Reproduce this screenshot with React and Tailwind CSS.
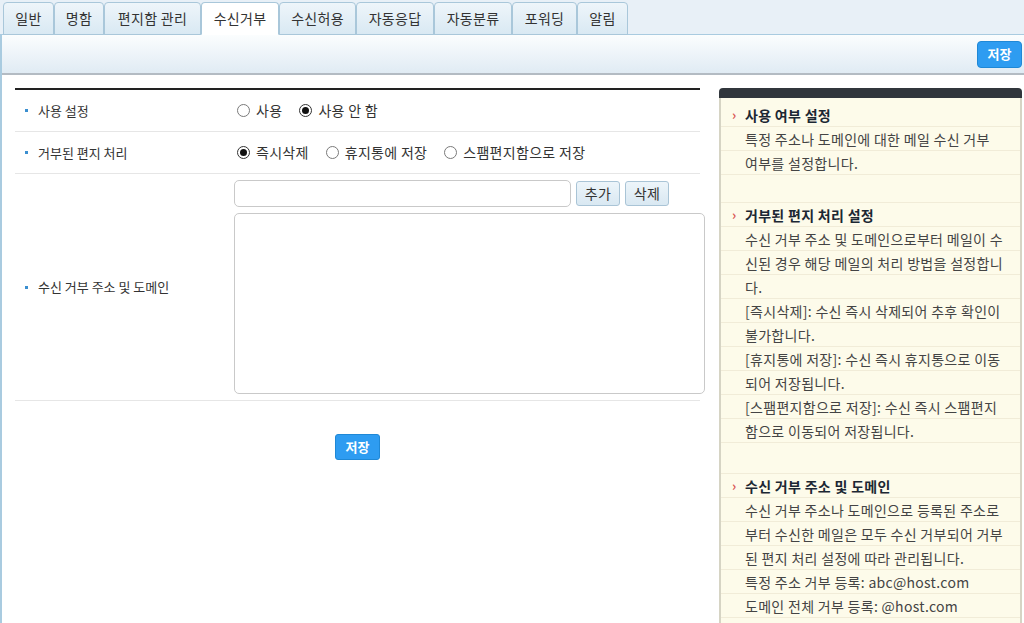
import React from "react";

const tabs = [
  { label: "일반", w: "w-[51px]" },
  { label: "명함", w: "w-[50px]" },
  { label: "편지함 관리", w: "w-[97px]" },
  { label: "수신거부", w: "w-[78px]", active: true },
  { label: "수신허용", w: "w-[77px]" },
  { label: "자동응답", w: "w-[78px]" },
  { label: "자동분류", w: "w-[78px]" },
  { label: "포워딩", w: "w-[65px]" },
  { label: "알림", w: "w-[51px]" },
];

const Radio = ({ checked, label }) => (
  <label className="flex items-center mr-[17px] text-[14px] tracking-[0.3px]">
    <span
      className={
        "w-[13px] h-[13px] rounded-full border bg-white flex items-center justify-center mr-[6px] " +
        (checked ? "border-[#333]" : "border-[#7a7a7a]")
      }
    >
      {checked && <span className="w-[7px] h-[7px] rounded-full bg-[#111]" />}
    </span>
    <span>{label}</span>
  </label>
);

const Label = ({ children }) => (
  <div className="w-[219px] shrink-0 flex items-center pl-[10px] text-[13px] text-[#333]">
    <span className="w-[3px] h-[3px] bg-[#3b8fd0] mr-[10px]" />
    {children}
  </div>
);

const Row = ({ children, cls = "" }) => (
  <div className={"h-[24px] leading-[24px] whitespace-nowrap border-b border-[#f1ecd8] " + cls}>{children}</div>
);

const Head = ({ children }) => (
  <Row cls="flex items-center">
    <span className="w-[24px] pl-[11px] text-[#d9534f] font-bold text-[13px]">›</span>
    <span className="font-bold text-[#1c2733]">{children}</span>
  </Row>
);

const Line = ({ children }) => <Row cls="pl-[24px]">{children}</Row>;

const App = () => {
  return (
    <div className="w-[1024px] h-[623px] overflow-hidden bg-white text-[13px] text-[#333] font-['Noto_Sans_CJK_KR','Noto_Sans',sans-serif]">
      {/* tabs */}
      <div className="h-[35px] bg-[#e8f0f7] border-b border-[#a9cbe0] flex items-end pl-[3px]">
        {tabs.map((t) => (
          <div
            key={t.label}
            className={
              t.w +
              " h-[33px] -mb-px flex items-center justify-center rounded-t-[4px] border border-[#a9c7da] text-[14px] tracking-[0.3px] " +
              (t.active
                ? "bg-white border-b-white"
                : "bg-gradient-to-b from-[#eef5fa] to-[#d9e9f3]")
            }
          >
            {t.label}
          </div>
        ))}
      </div>

      <div className="border-l-2 border-[#a9cbe0] h-[588px]">
        {/* toolbar */}
        <div className="h-[40px] bg-gradient-to-b from-[#fbfdfe] to-[#e0ebf4] border-b-2 border-[#b3bbc3] flex items-center justify-end pr-[2px]">
          <button className="w-[45px] h-[27px] rounded-[4px] bg-[#2e9cf1] border border-[#1f88d6] text-white font-bold text-[13px]">
            저장
          </button>
        </div>

        <div className="flex pl-[13px] pt-[13px]">
          {/* left form */}
          <div className="w-[690px] shrink-0">
            <div className="w-[685px] border-t-2 border-[#222]">
              <div className="h-[42px] flex border-b border-[#e6e6e6]">
                <Label>사용 설정</Label>
                <div className="flex items-center pl-[3px]">
                  <Radio label="사용" />
                  <Radio checked label="사용 안 함" />
                </div>
              </div>
              <div className="h-[42px] flex border-b border-[#e6e6e6]">
                <Label>거부된 편지 처리</Label>
                <div className="flex items-center pl-[3px]">
                  <Radio checked label="즉시삭제" />
                  <Radio label="휴지통에 저장" />
                  <Radio label="스팸편지함으로 저장" />
                </div>
              </div>
              <div className="flex border-b border-[#e6e6e6] pt-[6px] pb-[6px]">
                <Label>수신 거부 주소 및 도메인</Label>
                <div className="flex flex-col">
                  <div className="flex items-center">
                    <input className="w-[337px] h-[27px] border border-[#c9c9c9] rounded-[5px] outline-none px-2" />
                    <button className="ml-[5px] w-[44px] h-[25px] rounded-[3px] border border-[#a9c4d6] bg-gradient-to-b from-[#edf5fa] to-[#d9e8f2] text-[14px] tracking-[0.3px]">
                      추가
                    </button>
                    <button className="ml-[5px] w-[44px] h-[25px] rounded-[3px] border border-[#a9c4d6] bg-gradient-to-b from-[#edf5fa] to-[#d9e8f2] text-[14px] tracking-[0.3px]">
                      삭제
                    </button>
                  </div>
                  <textarea className="mt-[6px] w-[471px] h-[181px] border border-[#c9c9c9] rounded-[5px] outline-none resize-none" />
                </div>
              </div>
            </div>
            <div className="w-[685px] flex justify-center mt-[33px]">
              <button className="w-[45px] h-[26px] rounded-[3px] bg-[#2e9cf1] border border-[#1f88d6] text-white font-bold text-[13px]">
                저장
              </button>
            </div>
          </div>

          {/* help sidebar */}
          <div className="ml-[14px] w-[303px] shrink-0">
            <div className="h-[10px] bg-[#31363c] rounded-t-[4px]" />
            <div className="h-[540px] bg-[#fdfbea] border-x-2 border-[#d6d4c4] pt-[5px] text-[14px] tracking-[0.3px] text-[#444]">
              <Head>사용 여부 설정</Head>
              <Line>특정 주소나 도메인에 대한 메일 수신 거부</Line>
              <Line>여부를 설정합니다.</Line>
              <div className="h-[28px] border-b border-[#f1ecd8]" />
              <Head>거부된 편지 처리 설정</Head>
              <Line>수신 거부 주소 및 도메인으로부터 메일이 수</Line>
              <Line>신된 경우 해당 메일의 처리 방법을 설정합니</Line>
              <Line>다.</Line>
              <Line>[즉시삭제]: 수신 즉시 삭제되어 추후 확인이</Line>
              <Line>불가합니다.</Line>
              <Line>[휴지통에 저장]: 수신 즉시 휴지통으로 이동</Line>
              <Line>되어 저장됩니다.</Line>
              <Line>[스팸편지함으로 저장]: 수신 즉시 스팸편지</Line>
              <Line>함으로 이동되어 저장됩니다.</Line>
              <div className="h-[31px] border-b border-[#f1ecd8]" />
              <Head>수신 거부 주소 및 도메인</Head>
              <Line>수신 거부 주소나 도메인으로 등록된 주소로</Line>
              <Line>부터 수신한 메일은 모두 수신 거부되어 거부</Line>
              <Line>된 편지 처리 설정에 따라 관리됩니다.</Line>
              <Line>특정 주소 거부 등록: abc@host.com</Line>
              <Line>도메인 전체 거부 등록: @host.com</Line>
            </div>
          </div>
        </div>
      </div>
    </div>
  );
};

export default App;
